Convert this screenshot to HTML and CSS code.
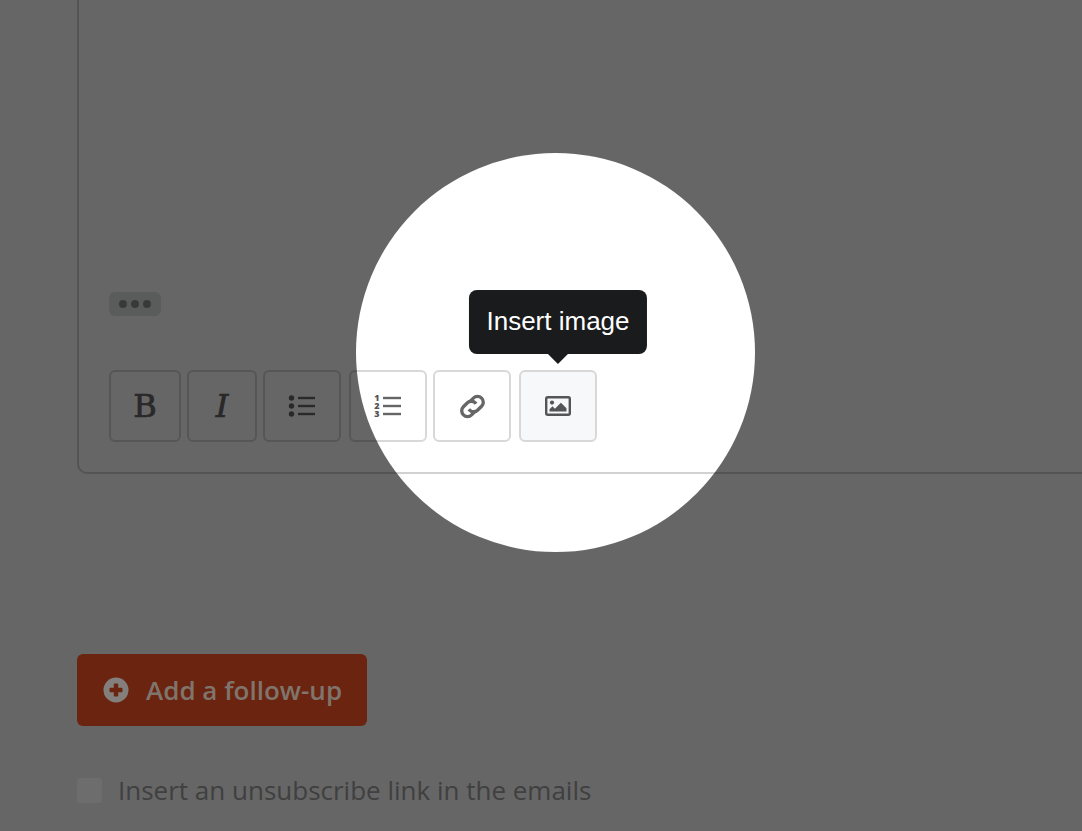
FILE: index.html
```html
<!DOCTYPE html>
<html lang="en">
<head>
    <meta charset="utf-8">
    <title>Follow-up email</title>
    <link rel="stylesheet" href="styles.css">
</head>
<body>
    <div class="page">
        <div class="editor">
            <div class="more"><span></span><span></span><span></span></div>
            <div class="toolbar">
                <button class="tool tool-b">B</button>
                <button class="tool tool-i">I</button>
                <button class="tool tool-ul">
                    <svg width="28" height="24" viewBox="0 0 28 24">
                        <circle cx="3.5" cy="4" r="2.7"/><circle cx="3.5" cy="12" r="2.7"/><circle cx="3.5" cy="20" r="2.7"/>
                        <rect x="10" y="2.8" width="17" height="2.4"/><rect x="10" y="10.8" width="17" height="2.4"/><rect x="10" y="18.8" width="17" height="2.4"/>
                    </svg>
                </button>
                <button class="tool tool-ol">
                    <span class="nums">1 2 3</span>
                    <svg width="18" height="24" viewBox="0 0 18 24">
                        <rect y="2.8" width="18" height="2.4"/><rect y="10.8" width="18" height="2.4"/><rect y="18.8" width="18" height="2.4"/>
                    </svg>
                </button>
                <button class="tool tool-link">
                    <svg class="chain" width="31" height="31" viewBox="0 0 28 28">
                        <path d="M11.6 9.6l3.2-3.2a5.2 5.2 0 0 1 7.4 0a5.2 5.2 0 0 1 0 7.4l-3.4 3.4a5.2 5.2 0 0 1-7.4 0l-.6-.8"/>
                        <path d="M16.4 18.4l-3.2 3.2a5.2 5.2 0 0 1-7.4 0a5.2 5.2 0 0 1 0-7.4l3.4-3.4a5.2 5.2 0 0 1 7.4 0l.6.8"/>
                    </svg>
                </button>
                <button class="tool tool-img">
                    <svg width="26" height="20" viewBox="0 0 26 20">
                        <rect class="frame" x="1.2" y="1.2" width="23.6" height="17.6" rx="1.5"/>
                        <circle cx="7" cy="6.6" r="2.1"/>
                        <path d="M4.5 15.5v-2.2l3-3 2.4 2.4 6-6 5.6 5.6v3.2z"/>
                    </svg>
                    <div class="tooltip">Insert image</div>
                </button>
            </div>
        </div>
        <button class="add-btn">
            <svg width="26" height="26" viewBox="0 0 26 26">
                <circle cx="13" cy="13" r="12.5" fill="#837f7c"/>
                <rect x="6.5" y="10.8" width="13" height="4.4" rx="1" fill="#6b2410"/>
                <rect x="10.8" y="6.5" width="4.4" height="13" rx="1" fill="#6b2410"/>
            </svg>
            Add a follow-up
        </button>
        <label class="unsub">
            <span class="check"></span>
            Insert an unsubscribe link in the emails
        </label>
    </div>
    <div class="spotlight"></div>
</body>
</html>
```

FILE: styles.css
```css
html, body {
    margin: 0;
    height: 831px;
    overflow: hidden;
    background: #fff;
    font-family: "Open Sans", sans-serif;
}
.page {
    padding-left: 77px;
}
.editor {
    box-sizing: border-box;
    height: 474px;
    padding: 0 0 30px 30px;
    border: 2px solid #d2d2d2;
    border-top: none;
    border-right: none;
    border-radius: 0 0 0 10px;
    display: flex;
    flex-direction: column;
    justify-content: flex-end;
}
.more {
    width: 52px;
    height: 24px;
    margin-bottom: 54px;
    background: #dfe6e3;
    border-radius: 6px;
    display: flex;
    align-items: center;
    justify-content: center;
    gap: 4px;
}
.more span {
    width: 8px;
    height: 8px;
    border-radius: 50%;
    background: #8f8f8f;
}
.toolbar {
    display: flex;
}
.tool {
    position: relative;
    box-sizing: border-box;
    width: 78px;
    height: 72px;
    margin: 0 6px 0 0;
    padding: 0;
    background: #fff;
    border: 2px solid #d8d8d8;
    border-radius: 6px;
    color: #666;
    display: flex;
    align-items: center;
    justify-content: center;
}
.tool svg {
    fill: #666;
}
.tool-b {
    width: 72px;
    font: 32px "DejaVu Serif", serif;
    -webkit-text-stroke: .7px #666;
}
.tool-i {
    width: 70px;
    font: italic 32px "DejaVu Serif", serif;
    -webkit-text-stroke: .7px #666;
}
.tool-ul, .tool-link {
    margin-right: 8px;
}
.tool-ol {
    gap: 2px;
    padding-right: 2px;
}
.nums {
    width: 7px;
    font: 800 9px/8px "Open Sans", sans-serif;
    color: #555;
    text-align: center;
}
.tool .chain {
    fill: none;
    stroke: #666;
    stroke-width: 3;
}
.tool-img {
    background: #f7f8fa;
}
.tool-img svg {
    fill: #555;
}
.tool-img .frame {
    fill: none;
    stroke: #555;
    stroke-width: 2.4;
}
.tooltip {
    position: absolute;
    z-index: 5;
    left: 50%;
    bottom: 86px;
    transform: translateX(-50%);
    padding: 0 17.5px;
    height: 64px;
    white-space: nowrap;
    background: #1a1b1d;
    color: #fff;
    border-radius: 8px;
    font: 26px/62px "Liberation Sans", sans-serif;
}
.tooltip::after {
    content: "";
    position: absolute;
    left: 50%;
    top: 100%;
    margin-left: -10px;
    border: 10px solid transparent;
    border-top-color: #1a1b1d;
    border-bottom: none;
}
.add-btn {
    position: relative;
    z-index: 5;
    box-sizing: border-box;
    width: 290px;
    height: 72px;
    margin-top: 180px;
    padding: 0 0 0 26px;
    border: none;
    border-radius: 6px;
    background: #6b2410;
    color: #7f756c;
    font: 600 26px "Open Sans", sans-serif;
    display: flex;
    align-items: center;
    gap: 17px;
}
.unsub {
    margin-top: 46px;
    display: flex;
    align-items: center;
    gap: 16px;
    color: #a0a0a0;
    font-size: 26px;
}
.check {
    position: relative;
    z-index: 5;
    width: 25px;
    height: 25px;
    background: #6d6d6d;
    border-radius: 3px;
}
.spotlight {
    position: absolute;
    z-index: 2;
    left: 356px;
    top: 153px;
    width: 399px;
    height: 399px;
    border-radius: 50%;
    box-shadow: 0 0 0 2000px rgba(0, 0, 0, .6);
}
```
